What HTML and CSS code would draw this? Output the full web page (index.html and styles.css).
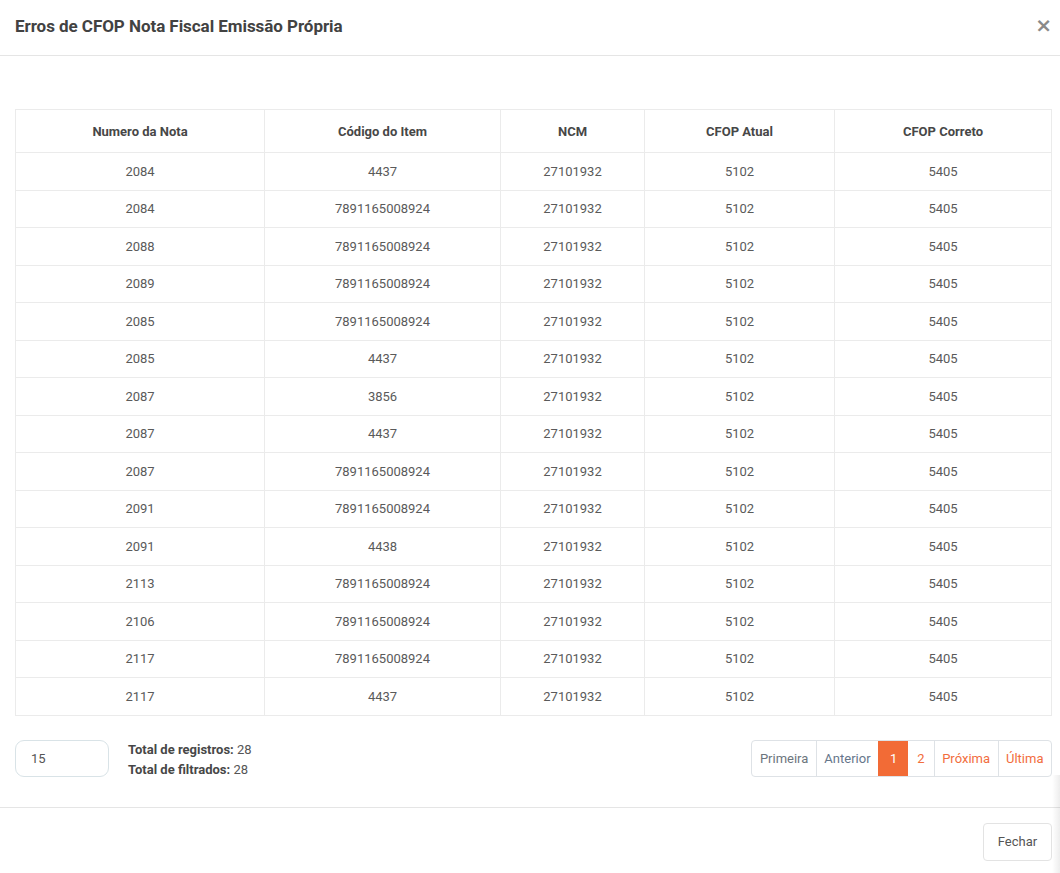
FILE: index.html
```html
<!DOCTYPE html>
<html lang="pt-BR">
<head>
<meta charset="utf-8">
<title>Erros de CFOP</title>
<link rel="stylesheet" href="styles.css">
</head>
<body>
<div class="modal">
  <div class="modal-header">
    <h4 class="modal-title">Erros de CFOP Nota Fiscal Emissão Própria</h4>
    <button class="close" type="button">×</button>
  </div>
  <div class="modal-body">
    <table class="grid">
      <colgroup>
        <col style="width:249px"><col style="width:236px"><col style="width:144px"><col style="width:190px"><col style="width:217px">
      </colgroup>
      <thead>
        <tr><th>Numero da Nota</th><th>Código do Item</th><th>NCM</th><th>CFOP Atual</th><th>CFOP Correto</th></tr>
      </thead>
      <tbody>
        <tr><td>2084</td><td>4437</td><td>27101932</td><td>5102</td><td>5405</td></tr>
        <tr><td>2084</td><td>7891165008924</td><td>27101932</td><td>5102</td><td>5405</td></tr>
        <tr><td>2088</td><td>7891165008924</td><td>27101932</td><td>5102</td><td>5405</td></tr>
        <tr><td>2089</td><td>7891165008924</td><td>27101932</td><td>5102</td><td>5405</td></tr>
        <tr><td>2085</td><td>7891165008924</td><td>27101932</td><td>5102</td><td>5405</td></tr>
        <tr><td>2085</td><td>4437</td><td>27101932</td><td>5102</td><td>5405</td></tr>
        <tr><td>2087</td><td>3856</td><td>27101932</td><td>5102</td><td>5405</td></tr>
        <tr><td>2087</td><td>4437</td><td>27101932</td><td>5102</td><td>5405</td></tr>
        <tr><td>2087</td><td>7891165008924</td><td>27101932</td><td>5102</td><td>5405</td></tr>
        <tr><td>2091</td><td>7891165008924</td><td>27101932</td><td>5102</td><td>5405</td></tr>
        <tr><td>2091</td><td>4438</td><td>27101932</td><td>5102</td><td>5405</td></tr>
        <tr><td>2113</td><td>7891165008924</td><td>27101932</td><td>5102</td><td>5405</td></tr>
        <tr><td>2106</td><td>7891165008924</td><td>27101932</td><td>5102</td><td>5405</td></tr>
        <tr><td>2117</td><td>7891165008924</td><td>27101932</td><td>5102</td><td>5405</td></tr>
        <tr><td>2117</td><td>4437</td><td>27101932</td><td>5102</td><td>5405</td></tr>
      </tbody>
    </table>
    <div class="table-footer">
      <div class="left">
        <div class="page-size">15</div>
        <div class="totals">
          <div><b>Total de registros:</b> 28</div>
          <div><b>Total de filtrados:</b> 28</div>
        </div>
      </div>
      <ul class="pagination">
        <li class="muted">Primeira</li>
        <li class="muted2">Anterior</li>
        <li class="active">1</li>
        <li>2</li>
        <li>Próxima</li>
        <li>Última</li>
      </ul>
    </div>
  </div>
  <div class="modal-footer">
    <button class="btn" type="button">Fechar</button>
  </div>
</div>
<div class="edge-shadow"></div>
</body>
</html>
```
FILE: styles.css
```css
* { box-sizing: border-box; }
html, body { margin: 0; padding: 0; background: #fff; }
body {
  font-family: Roboto, "Liberation Sans", Arial, sans-serif;
  font-size: 13px;
  color: #555;
  width: 1060px;
  height: 873px;
  overflow: hidden;
  position: relative;
}
.modal { width: 1060px; }
.modal-header {
  height: 56px;
  border-bottom: 1px solid #e5e5e5;
  display: flex;
  align-items: center;
  justify-content: space-between;
  padding: 0 8px 3px 15px;
}
.modal-title {
  margin: 0;
  font-size: 17px;
  font-weight: 700;
  color: #424242;
  letter-spacing: -0.05px;
}
.close {
  border: 0;
  background: none;
  padding: 0;
  font-family: "DejaVu Sans", Arial, sans-serif;
  font-size: 20px;
  font-weight: 700;
  line-height: 1;
  color: #8a8a8a;
  margin-top: -2px;
}
.modal-body { padding: 53px 8px 0 15px; }
.grid {
  width: 1036px;
  border-collapse: collapse;
  table-layout: fixed;
}
.grid th, .grid td {
  border: 1px solid #ebebeb;
  text-align: center;
  padding: 0 8px;
}
.grid th {
  height: 43px;
  font-weight: 700;
  color: #474747;
}
.grid td { height: 37.5px; color: #5a5a5a; }
.table-footer {
  display: flex;
  justify-content: space-between;
  align-items: center;
  margin-top: 24px;
  height: 37px;
}
.left { display: flex; align-items: center; gap: 19px; }
.page-size {
  width: 94px;
  height: 37px;
  border: 1px solid #d9e3e7;
  border-radius: 9px;
  padding-left: 15px;
  display: flex;
  align-items: center;
  color: #555;
}
.totals { line-height: 20px; color: #555; padding-top: 3px; }
.totals b { color: #474747; }
.pagination {
  list-style: none;
  margin: 0;
  padding: 0;
  display: flex;
  height: 37px;
  border: 1px solid #dee2e6;
  border-radius: 4px;
}
.pagination li {
  display: flex;
  align-items: center;
  padding: 0 7.5px;
  color: #f26d3d;
  border-left: 1px solid #dee2e6;
}
.pagination li:first-child { border-left: 0; }
.pagination li.muted { color: #6c757d; }
.pagination li.muted2 { color: #66768b; }
.pagination li.active {
  background: #f26b36;
  color: #fff;
  border-left-color: #f26b36;
  padding: 0 11px;
}
.pagination li.active + li { border-left: 0; padding: 0 9px; }
.modal-footer {
  margin-top: 30px;
  border-top: 1px solid #e5e5e5;
  padding: 15px 8px 0 15px;
  display: flex;
  justify-content: flex-end;
}
.btn {
  font-family: Roboto, "Liberation Sans", Arial, sans-serif;
  font-size: 13px;
  color: #555;
  background: #fff;
  border: 1px solid #e3e3e3;
  border-radius: 4px;
  width: 69px;
  height: 38px;
}
.edge-shadow {
  position: absolute;
  right: 0;
  top: 775px;
  width: 8px;
  height: 98px;
  background: linear-gradient(to right, rgba(0,0,0,0), rgba(0,0,0,0.07));
}
```
